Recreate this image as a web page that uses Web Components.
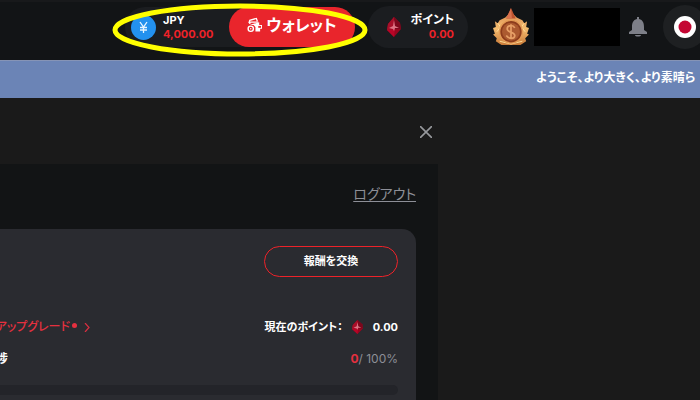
<!DOCTYPE html>
<html lang="ja">
<head>
<meta charset="utf-8">
<meta name="viewport" content="width=device-width, initial-scale=1">
<title>ウォレット</title>
<style>
  body {
    margin: 0;
    min-height: 100vh;
    background: #1a1a1a;
    color: #ffffff;
    font-family: Inter, "Noto Sans CJK JP", sans-serif;
    font-size: 12px;
    line-height: 14px;
    font-feature-settings: "palt";
    overflow: hidden;
    --red: #ee2229;
    --soft-red: #e5303f;
    --muted: #8d8f97;
    --card: #2a2b30;
  }
</style>
</head>
<body>
<top-bar>
  <wallet-balance currency="JPY" amount="4,000.00">ウォレット</wallet-balance>
  <points-pill amount="0.00">ポイント</points-pill>
  <user-tools></user-tools>
</top-bar>
<news-banner>ようこそ、より大きく、より素晴ら</news-banner>
<account-panel>
  <points-card></points-card>
</account-panel>

<script>
// attach an open shadow root filled from a template
function render(el, html) {
  const template = document.createElement("template");
  template.innerHTML = html;
  el.attachShadow({ mode: "open" }).appendChild(template.content.cloneNode(true));
}

/** red faceted gem used next to point totals */
class GemIcon extends HTMLElement {
  constructor() {
    super();
    render(this, `
<style>
:host { display: block; width: 14px; height: 20px; }
svg { display: block; width: 100%; height: 100%; }
</style>
<svg viewBox="0 0 14 20" preserveAspectRatio="none" aria-hidden="true">
  <path d="M7 0 13 6 14 12 7 20 0 13 1 7Z" fill="#98051f"/>
  <path d="M7 0 8 12 0 13 1 7Z" fill="#a80f29"/>
  <path d="M7 0 13 6 14 12 8 12Z" fill="#7b071c"/>
  <path d="M0 13 8 12 7 20Z" fill="#b80527"/>
  <path d="M2 11 6 9 7 3 8 9 12 11 8 11 7 14 6 12Z" fill="#dd7484"/>
</svg>`);
  }
}
customElements.define("gem-icon", GemIcon);

class TopBar extends HTMLElement {
  constructor() {
    super();
    render(this, `
<style>
:host {
  display: flex;
  justify-content: flex-end;
  align-items: center;
  gap: 13px;
  height: 60px;
  padding-bottom: 8px;
  box-sizing: border-box;
  background: #121416;
  border-top: 2px solid #18191b;
}
</style>
<slot></slot>`);
  }
}
customElements.define("top-bar", TopBar);

/**
 * wallet-balance
 * @example <wallet-balance currency="JPY" amount="0.00">Wallet</wallet-balance>
 */
class WalletBalance extends HTMLElement {
  constructor() {
    super();
    render(this, `
<style>
:host {
  position: relative;
  display: flex;
  align-items: center;
  flex: none;
  box-sizing: border-box;
  width: 230px;
  height: 40px;
  padding-left: 6px;
  border-radius: 20px;
  background: #1b1d20;
}
.coin { width: 25px; height: 25px; margin-right: 7px; }
.value { flex: 1; font-size: 11px; font-weight: 700; }
.value div:last-child { color: var(--red); }
button {
  display: flex;
  align-items: center;
  justify-content: center;
  gap: 4px;
  width: 126px;
  height: 40px;
  padding: 0 0 4px;
  border: 0;
  border-radius: 20px;
  background: #e9252c;
  color: #fff;
  font: 700 16px/20px Inter, "Noto Sans CJK JP", sans-serif;
  font-feature-settings: inherit;
}
/* highlight ring drawn over the whole control */
.ring {
  position: absolute;
  left: -14px;
  top: -4px;
  width: 258px;
  height: 54px;
  pointer-events: none;
}
</style>
<svg class="coin" viewBox="0 0 25 25" aria-hidden="true">
  <circle cx="12.500" cy="12.500" r="12.500" fill="#2391ee"/>
  <path d="M9 7 12.500 12 16 7M12.500 12V18M9 12.500H16M9 15H16" fill="none" stroke="#e9f6ff" stroke-width="1.300"/>
</svg>
<div class="value"><div id="currency"></div><div id="amount"></div></div>
<button type="button">
  <svg width="15" height="16" viewBox="0 0 16 16" aria-hidden="true">
    <path d="M2 6 3 3 10 1 11 4M3 7V5H12" fill="none" stroke="#fff" stroke-width="1.400"/>
    <path d="M6 7 13 5V8H16V12H14V15H9V10L7 8H3Z" fill="#fff"/>
    <path d="M12 9H15V11H12Z" fill="#e9252c"/>
    <circle cx="4" cy="12" r="2.800" fill="#e9252c" stroke="#fff" stroke-width="1.500"/>
    <circle cx="4" cy="12" r=".8" fill="#fff"/>
  </svg>
  <slot></slot>
</button>
<svg class="ring" viewBox="0 0 258 54" aria-hidden="true">
  <ellipse cx="129" cy="27" rx="125" ry="24" fill="none" stroke="#ffff00" stroke-width="5"/>
</svg>`);
  }

  connectedCallback() {
    this.shadowRoot.querySelector("#currency").textContent = this.getAttribute("currency");
    this.shadowRoot.querySelector("#amount").textContent = this.getAttribute("amount");
  }
}
customElements.define("wallet-balance", WalletBalance);

class PointsPill extends HTMLElement {
  constructor() {
    super();
    render(this, `
<style>
:host {
  display: flex;
  align-items: center;
  justify-content: space-between;
  flex: none;
  box-sizing: border-box;
  width: 100px;
  height: 42px;
  padding: 0 14px 0 19px;
  border-radius: 21px;
  background: #1b1d20;
  font-weight: 700;
}
.value { text-align: right; }
#amount { color: var(--red); font-size: 11px; }
</style>
<gem-icon></gem-icon>
<div class="value"><slot></slot><div id="amount"></div></div>`);
  }

  connectedCallback() {
    this.shadowRoot.querySelector("#amount").textContent = this.getAttribute("amount");
  }
}
customElements.define("points-pill", PointsPill);

/** rank badge, user name block, notifications and language */
class UserTools extends HTMLElement {
  constructor() {
    super();
    render(this, `
<style>
:host {
  display: flex;
  align-items: center;
  flex: none;
  margin-left: 12px;
  margin-right: -7px;
}
button { display: flex; align-items: center; justify-content: center; padding: 0; border: 0; background: none; }
.name { width: 86px; height: 38px; margin-left: 5px; background: #000; }
.bell { margin: 0 16px 0 9px; }
.language { width: 44px; height: 44px; border-radius: 22px; background: #1e2022; }
</style>
<svg width="36" height="38" viewBox="0 0 38 40" aria-hidden="true">
  <defs>
    <linearGradient id="rim" x1="0" y1="0" x2="0" y2="1">
      <stop offset="0" stop-color="#d98a50"/><stop offset=".5" stop-color="#f5bd70"/><stop offset="1" stop-color="#c87a38"/>
    </linearGradient>
  </defs>
  <path d="M19 4 25 10 31 13 33 16 36 14 35 20 38 21 36 27 38 28 34 32 35 35 29 39H9L3 35 4 32 0 28 2 27 0 21 3 20 2 14 5 16 7 13 13 10Z" fill="url(#rim)"/>
  <path d="M5 16 8 20 4 25M33 16 30 20 34 25M7 35 19 38 31 35" fill="none" stroke="#ffdf9a" stroke-width="1"/>
  <path d="M19 0 24 11H14Z" fill="#bd532f"/>
  <path d="M19 0 20 11 14 11Z" fill="#d9734f"/>
  <circle cx="19" cy="25" r="12" fill="#8d3c1c" stroke="#e39a55" stroke-width="1.500"/>
  <circle cx="19" cy="25" r="9.500" fill="#ac5a30"/>
  <path d="M23 21C21 17 15 18 15 22S23 25 23 29 17 33 14 29M19 17V33" fill="none" stroke="#e79f66" stroke-width="1.800"/>
</svg>
<div class="name"></div>
<button class="bell" type="button" aria-label="通知">
  <svg width="18" height="20" viewBox="0 0 18 20">
    <path d="M8 0H10V2C14 3 15 6 15 10V13L18 15V17H0V15L3 13V10C3 6 4 3 8 2ZM6 18H12C12 20 6 20 6 18Z" fill="#7d7f88"/>
  </svg>
</button>
<button class="language" type="button" aria-label="日本語">
  <svg width="22" height="22" viewBox="0 0 22 22">
    <circle cx="11" cy="11" r="11" fill="#fff"/><circle cx="11" cy="11" r="6.500" fill="#c40733"/>
  </svg>
</button>`);
  }
}
customElements.define("user-tools", UserTools);

class NewsBanner extends HTMLElement {
  constructor() {
    super();
    render(this, `
<style>
:host {
  display: block;
  overflow: hidden;
  padding: 10px 0 13px 536px;
  background: #6b84b6;
  border-top: 1px solid #8694b6;
  box-sizing: border-box;
  white-space: nowrap;
  font-weight: 700;
}
</style>
<slot></slot>`);
  }
}
customElements.define("news-banner", NewsBanner);

class AccountPanel extends HTMLElement {
  constructor() {
    super();
    render(this, `
<style>
:host { display: block; width: 63%; }
.close { display: flex; justify-content: flex-end; padding: 28px 9px 26px 0; }
.close button { display: block; padding: 0; border: 0; background: none; }
.close svg { display: block; }
.body { margin-right: 3px; padding-right: 22px; background: #121415; }
.logout { display: flex; justify-content: flex-end; padding: 20px 0 25px; }
a { color: var(--muted); font-size: 14px; line-height: 20px; text-underline-offset: 2px; }
</style>
<div class="close">
  <button type="button" aria-label="閉じる">
    <svg width="12" height="12" viewBox="0 0 12 12"><path d="M0 0 12 12M12 0 0 12" stroke="#96989c" stroke-width="1.600"/></svg>
  </button>
</div>
<div class="body">
  <div class="logout"><a href="#">ログアウト</a></div>
  <slot></slot>
</div>`);
  }
}
customElements.define("account-panel", AccountPanel);

class PointsCard extends HTMLElement {
  constructor() {
    super();
    render(this, `
<style>
:host {
  display: block;
  box-sizing: border-box;
  padding: 17px 18px 7px 0;
  border-radius: 0 14px 0 0;
  background: var(--card);
}
.exchange {
  display: block;
  width: 134px;
  height: 31px;
  margin: 0 0 0 auto;
  padding: 0 0 2px;
  border: 1px solid var(--red);
  border-radius: 16px;
  background: none;
  color: #fff;
  font: 700 11px/14px Inter, "Noto Sans CJK JP", sans-serif;
  font-feature-settings: inherit;
}
.row { display: flex; align-items: center; justify-content: space-between; height: 32px; }
.row:first-of-type { margin-top: 34px; }
/* the left labels run in from beyond the panel edge */
.clip { display: flex; align-items: center; justify-content: flex-end; overflow: hidden; white-space: nowrap; }
.clip svg { flex: none; }
.upgrade { width: 90px; gap: 7px; color: var(--soft-red); text-decoration: none; font-weight: 500; }
.upgrade i { flex: none; width: 5px; height: 5px; margin: 0 0 4px -5px; border-radius: 50%; background: currentColor; }
.progress { width: 8px; font-weight: 700; }
.points { display: flex; align-items: center; font-size: 11px; font-weight: 700; }
.points gem-icon { width: 11px; height: 14px; margin: 0 10px 0 9px; }
.percent { color: var(--muted); }
.percent b { color: var(--soft-red); }
.track { height: 10px; margin-top: 10px; border-radius: 0 5px 5px 0; background: #232429; }
</style>
<button class="exchange" type="button">報酬を交換</button>
<div class="row">
  <a class="clip upgrade" href="#"><span>アップグレード</span><i></i>
    <svg width="6" height="9" viewBox="0 0 6 9" aria-hidden="true"><path d="M1 0 5 4.500 1 9" fill="none" stroke="#d92f41" stroke-width="1.200"/></svg>
  </a>
  <div class="points">現在のポイント：<gem-icon></gem-icon>0.00</div>
</div>
<div class="row">
  <div class="clip progress">捗</div>
  <div class="percent"><b>0</b>/ 100%</div>
</div>
<div class="track"></div>`);
  }
}
customElements.define("points-card", PointsCard);
</script>
</body>
</html>
